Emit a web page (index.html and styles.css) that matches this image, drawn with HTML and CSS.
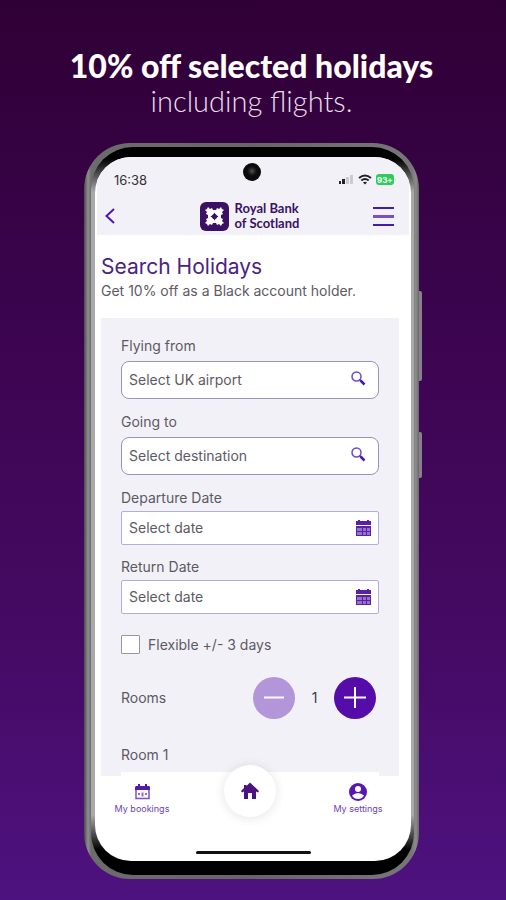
FILE: index.html
```html
<!DOCTYPE html>
<html lang="en">
<head>
<meta charset="utf-8">
<meta name="viewport" content="width=device-width, initial-scale=1">
<title>Search Holidays</title>
<link rel="stylesheet" href="styles.css">
</head>
<body>
<main class="stage">
  <h1 class="hero"><strong>10% off selected holidays</strong><span>including flights.</span></h1>
  <div class="phone">
    <i class="side-key side-key-long"></i>
    <i class="side-key side-key-short"></i>
    <i class="camera"></i>
    <div class="bezel">
    <div class="screen">
      <header class="top">
        <div class="status">
          <span>16:38</span>
          <svg width="57" height="14" viewBox="0 0 57 14">
            <g fill="#222"><rect x="0" y="8" width="2" height="3"/><rect x="3" y="6" width="3" height="5"/></g>
            <g fill="#ccc9d4"><rect x="7" y="4" width="3" height="7"/><rect x="11" y="2" width="3" height="9"/></g>
            <g fill="none" stroke="#222" stroke-width="2"><path d="M20 5q6-5 12 0M22.300 7.500q3.700-3 7.400 0"/></g>
            <path d="M24 9.500q2-1.500 4 0l-2 2z" fill="#222"/>
            <rect x="37" y="1" width="18" height="11" rx="3" fill="#2fcb5b"/><path d="M56 5v3q1-1.500 0-3" fill="#9bdcae"/>
            <text x="38" y="10" class="battery">93+</text>
          </svg>
        </div>
        <div class="bar">
          <button class="icon-button" aria-label="Back"><svg width="12" height="18" viewBox="0 0 12 18"><path d="M10 2 2.500 9l7.500 7" fill="none" stroke="#4a1db0" stroke-width="2"/></svg></button>
          <a class="brand" href="#">
            <svg width="29" height="29" viewBox="0 0 29 29">
              <rect width="29" height="29" rx="6" fill="#3b1163"/>
              <path d="M8 5 10 7l2-1 1 2h3l1-2 2 1 2-2 1 2 2 1-2 2 1 2-2 1v3l2 1-1 2 2 2-2 1-1 2-2-2-2 1-1-2h-3l-1 2-2-1-2 2-1-2-2-1 2-2-1-2 2-1v-3l-2-1 1-2-2-2 2-1z" fill="#fff"/>
              <path d="M14.500 10.500 16 13l2.500 1.500L16 16l-1.500 2.500L13 16l-2.500-1.500L13 13z" fill="#3b1163"/>
              <circle cx="14.500" cy="14.500" r="2.500" fill="#3b1163"/>
            </svg>
            <span>Royal Bank<br>of Scotland</span>
          </a>
          <button class="icon-button" aria-label="Menu"><svg width="21" height="19" viewBox="0 0 21 19"><path d="M0 1h21M0 18h21" stroke="#4518ae" stroke-width="2"/><path d="M0 9.500h21" stroke="#7a4fc4" stroke-width="3"/></svg></button>
        </div>
      </header>
      <section class="intro">
        <h2>Search Holidays</h2>
        <p>Get 10% off as a Black account holder.</p>
      </section>
      <form class="panel">
        <div class="field">
          <label for="from">Flying from</label>
          <div class="box"><input id="from" placeholder="Select UK airport"><svg class="search" width="15" height="15" viewBox="0 0 15 15"><circle cx="5.500" cy="5.500" r="4.500" fill="none" stroke="#6a4cc0" stroke-width="1.500"/><path d="m8.500 8.500 1.500 1.500" stroke="#5a38b8" stroke-width="1.500"/><path d="m9.500 9.500 4 4" stroke="#4518ae" stroke-width="2.500"/></svg></div>
        </div>
        <div class="field">
          <label for="to">Going to</label>
          <div class="box"><input id="to" placeholder="Select destination"><svg class="search" width="15" height="15" viewBox="0 0 15 15"><circle cx="5.500" cy="5.500" r="4.500" fill="none" stroke="#6a4cc0" stroke-width="1.500"/><path d="m8.500 8.500 1.500 1.500" stroke="#5a38b8" stroke-width="1.500"/><path d="m9.500 9.500 4 4" stroke="#4518ae" stroke-width="2.500"/></svg></div>
        </div>
        <div class="field date">
          <label for="depart">Departure Date</label>
          <div class="box"><input id="depart" placeholder="Select date"><svg width="15" height="16" viewBox="0 0 15 16"><path d="M0 1h2V0h2v1h7V0h2v1h2v4H0z" fill="#5b21a5"/><path d="M0 6h15v10H0z" fill="#5b21a5"/><path d="M1 8h5v3H1zM7 8h3v3H7zM11 8h3v3h-3zM1 12h5v3H1zM7 12h3v3H7zM11 12h3v3h-3z" fill="#9672ca"/></svg></div>
        </div>
        <div class="field date">
          <label for="return">Return Date</label>
          <div class="box"><input id="return" placeholder="Select date"><svg width="15" height="16" viewBox="0 0 15 16"><path d="M0 1h2V0h2v1h7V0h2v1h2v4H0z" fill="#5b21a5"/><path d="M0 6h15v10H0z" fill="#5b21a5"/><path d="M1 8h5v3H1zM7 8h3v3H7zM11 8h3v3h-3zM1 12h5v3H1zM7 12h3v3H7zM11 12h3v3h-3z" fill="#9672ca"/></svg></div>
        </div>
        <div class="check"><input type="checkbox" id="flexible"><label for="flexible">Flexible +/- 3 days</label></div>
        <div class="rooms">
          <span>Rooms</span>
          <div class="stepper">
            <button type="button" class="minus" aria-label="Fewer rooms"><svg width="22" height="22" viewBox="0 0 22 22"><path d="M1 10.500h20" stroke="#fff" stroke-width="2"/></svg></button>
            <output>1</output>
            <button type="button" class="plus" aria-label="More rooms"><svg width="22" height="22" viewBox="0 0 22 22"><path d="M0 10.500h22M11 0v21" stroke="#fff" stroke-width="2"/></svg></button>
          </div>
        </div>
        <span class="room-title">Room 1</span>
        <div class="room-edge"></div>
      </form>
      <nav class="tabs">
        <a class="tab" href="#"><svg width="15" height="16" viewBox="0 0 15 16"><path d="M1 2h2V0h2v2h5V0h2v2h2l1 1v3H0V3z" fill="#5418ac"/><path d="M1 6v8.500h13V6" fill="none" stroke="#7a52bd" stroke-width="1.500"/><path d="M3 9h2v2H3zM6.500 8.500h2v4h-2zM10 9h2v2h-2z" fill="#8d6cc9"/></svg><span>My bookings</span></a>
        <a class="home" href="#" aria-label="Home"><svg width="18" height="18" viewBox="0 0 18 18"><path d="M9 .500 18 9l-1 1.500-2-1V17h-4v-6H7v6H3V9.500l-2 1L0 9 3 6V3h2.500v1z" fill="#4b1280"/></svg></a>
        <a class="tab" href="#"><svg width="18" height="18" viewBox="0 0 18 18"><circle cx="9" cy="9" r="9" fill="#5618ae"/><circle cx="9" cy="6" r="3" fill="#fff"/><path d="M3 12.500q6-5 12 0-2 3.500-6 3.500t-6-3.500" fill="#fff"/></svg><span>My settings</span></a>
      </nav>
      <div class="home-indicator"></div>
    </div>
    </div>
  </div>
</main>
</body>
</html>
```
FILE: styles.css
```css
* { box-sizing: border-box; }
body {
  margin: 0;
  min-height: 100vh;
  font: 14px/16px Inter, "Liberation Sans", sans-serif;
  color: #5d5a63;
  background: linear-gradient(#2f0035 0%, #3d0552 40%, #450a63 70%, #4e1280 100%);
}
button { border: 0; padding: 0; background: none; cursor: pointer; }
a { color: inherit; text-decoration: none; }
svg { display: block; flex: none; }

.stage { padding: 48px 87px 21px 84px; }
.hero {
  display: flex;
  flex-direction: column;
  align-items: center;
  margin: 0 -40px 25px;
  font: 300 29px/35px Lato, sans-serif;
  color: #e6dfe9;
  white-space: nowrap;
}
.hero strong { font-size: 32px; font-weight: 900; color: #fff; }

.phone {
  position: relative;
  max-width: 420px;
  margin: 0 auto;
  padding: 4px 5px 4px 7px;
  border-radius: 46px;
  background: linear-gradient(90deg, #4a4a4a 0, #8f8f8f 4px, #6c6c6c 7px, #666 50%, #777 calc(100% - 7px), #8c8c8c calc(100% - 3px), #666 100%);
}
.bezel {
  padding: 10px 3px 14px 4px;
  border-radius: 42px;
  background: linear-gradient(#000 0, #000 12px, #a9a9a9 45px, #a9a9a9 calc(100% - 60px), #000 calc(100% - 25px));
}
.side-key {
  position: absolute;
  left: 100%;
  width: 3px;
  border-radius: 0 2px 2px 0;
  background: #88818c;
}
.side-key-long { top: 148px; height: 90px; }
.side-key-short { top: 289px; height: 46px; }
.camera {
  position: absolute;
  top: 20px;
  left: 50%;
  width: 18px;
  height: 18px;
  margin-left: -9px;
  border-radius: 50%;
  background: radial-gradient(circle at 50% 45%, #555 0, #222 3px, #0b0b0b 5px);
}
.screen {
  overflow: hidden;
  padding: 0 2px;
  border-radius: 36px;
  background: #fff;
}

.top { height: 78px; padding: 16px 15px 0 7px; background: #f2f1f8; }
.status {
  display: flex;
  justify-content: space-between;
  align-items: center;
  padding-left: 10px;
  font-size: 13px;
  line-height: 14px;
  color: #333;
}
.status svg { margin-right: -2px; }
.battery { font: 700 8px Inter, sans-serif; fill: #fff; }
.bar { display: flex; justify-content: space-between; align-items: center; margin-top: 14px; }
.brand {
  display: flex;
  align-items: center;
  gap: 6px;
  margin-left: 10px;
  font: 700 13px/15px Lato, sans-serif;
  color: #3b1163;
}

.intro { padding: 20px 4px 0; }
.intro h2 { margin: 0; font-size: 21px; font-weight: 400; line-height: 24px; color: #4b2382; }
.intro p { margin: 4px 0 19px; }

.panel { margin: 0 10px 0 4px; padding: 20px 20px 0; background: #f2f1f8; }
.field { display: flex; flex-direction: column; gap: 7px; margin-bottom: 15px; }
.box {
  display: flex;
  align-items: center;
  height: 38px;
  padding: 0 12px 0 7px;
  border: 1px solid #9b93b8;
  border-radius: 8px;
  background: #fff;
}
.box input {
  flex: 1;
  min-width: 0;
  padding: 0;
  border: 0;
  outline: 0;
  background: none;
  font: inherit;
  color: inherit;
}
.box input::placeholder { color: #5d5a63; opacity: 1; }
.search { margin-bottom: 4px; }
.date { gap: 5px; margin-bottom: 14px; }
.date .box { height: 34px; padding-right: 7px; border: 1px solid #b5add8; border-radius: 2px; }
.check { display: flex; align-items: center; gap: 8px; margin-top: 21px; }
.check input {
  appearance: none;
  width: 19px;
  height: 19px;
  margin: 0;
  border: 1px solid #9994a8;
  border-radius: 1px;
  background: #fff;
}
.rooms { display: flex; justify-content: space-between; align-items: center; margin: 23px 3px 28px 0; }
.stepper { display: flex; align-items: center; }
.stepper button {
  display: grid;
  place-items: center;
  width: 42px;
  height: 42px;
  border-radius: 50%;
}
.stepper .minus { background: #b395d9; }
.stepper .plus { background: #560ca8; }
.stepper output { width: 39px; text-align: center; color: #3d3943; }
.room-title { display: block; }
.room-edge { height: 4px; margin-top: 9px; background: #fff; }

.tabs {
  display: flex;
  justify-content: space-between;
  align-items: flex-start;
  height: 75px;
  padding: 7px 23px 0 17px;
  font-size: 9px;
  line-height: 12px;
  color: #6c42b8;
}
.tab {
  display: flex;
  flex-direction: column;
  align-items: center;
  gap: 2px;
  width: 56px;
  white-space: nowrap;
}
.tab svg { height: 18px; }
.home {
  display: grid;
  place-items: center;
  width: 52px;
  height: 52px;
  margin-top: -18px;
  border-radius: 50%;
  background: #fff;
  box-shadow: 0 1px 12px #0000001c;
}
.home-indicator { width: 115px; height: 3px; margin: 0 auto 7px; border-radius: 2px; background: #111; }
```
